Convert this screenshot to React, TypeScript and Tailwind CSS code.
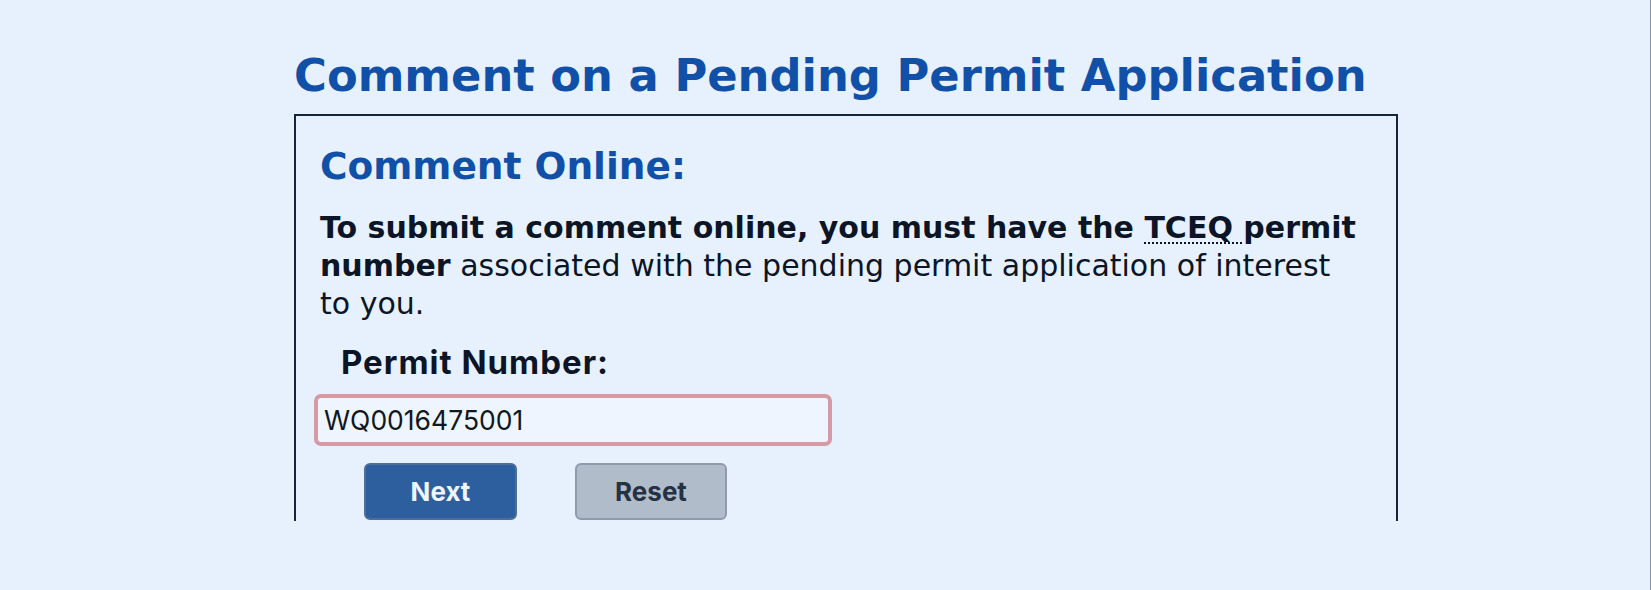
export default function App() {
  return (
    <div className="w-[1651px] h-[590px] overflow-hidden bg-[#e7f0fd] border-r border-[#8b95a3] font-['DejaVu_Sans',Verdana,sans-serif]">
      <div className="pl-[294px] pt-[48px]">
        <h1 className="text-[44.8px] leading-[56px] font-bold text-[#1050a8] whitespace-nowrap">
          Comment on a Pending Permit Application
        </h1>
        <div className="mt-[10px] w-[1104px] h-[407px] border-2 border-b-0 border-[#17253a] pl-[24px] pt-[28px]">
          <h2 className="text-[37.5px] leading-[44px] font-bold text-[#1050a8]">Comment Online:</h2>
          <p className="mt-[21px] w-[1040px] text-[30px] leading-[38px] text-[#0b1526]">
            <b>
              To submit a comment online, you must have the{" "}
              <abbr title="Texas Commission on Environmental Quality" className="underline decoration-dotted decoration-[2px] underline-offset-[4px]">
                TCEQ{" "}
              </abbr>
              permit number
            </b>{" "}
            associated with the pending permit application of interest to you.
          </p>
          <div className="mt-[20px] pl-[21px] font-['Inter',sans-serif] font-bold text-[33px] tracking-[1px] leading-[38px] text-[#0b1526]">
            Permit Number:
          </div>
          <input
            type="text"
            defaultValue="WQ0016475001"
            className="block mt-[13px] ml-[-6px] w-[518px] h-[52px] border-[4px] border-[#d69aa5] rounded-[7px] bg-[#eff5fe] pl-[6px] font-['Inter',sans-serif] text-[26.5px] text-[#101820] outline-none"
          />
          <div className="flex mt-[17px] ml-[44px] gap-[58px] font-['Inter',sans-serif]">
            <button className="w-[153px] h-[57px] rounded-[6px] bg-[#2d5e9e] border-2 border-[#4e6d97] text-[26px] font-bold text-[#eef4fc]">
              Next
            </button>
            <button className="w-[152px] h-[57px] rounded-[6px] bg-[#b1bccb] border-2 border-[#8f9aab] text-[26px] font-bold text-[#253243]">
              Reset
            </button>
          </div>
        </div>
      </div>
    </div>
  );
}
